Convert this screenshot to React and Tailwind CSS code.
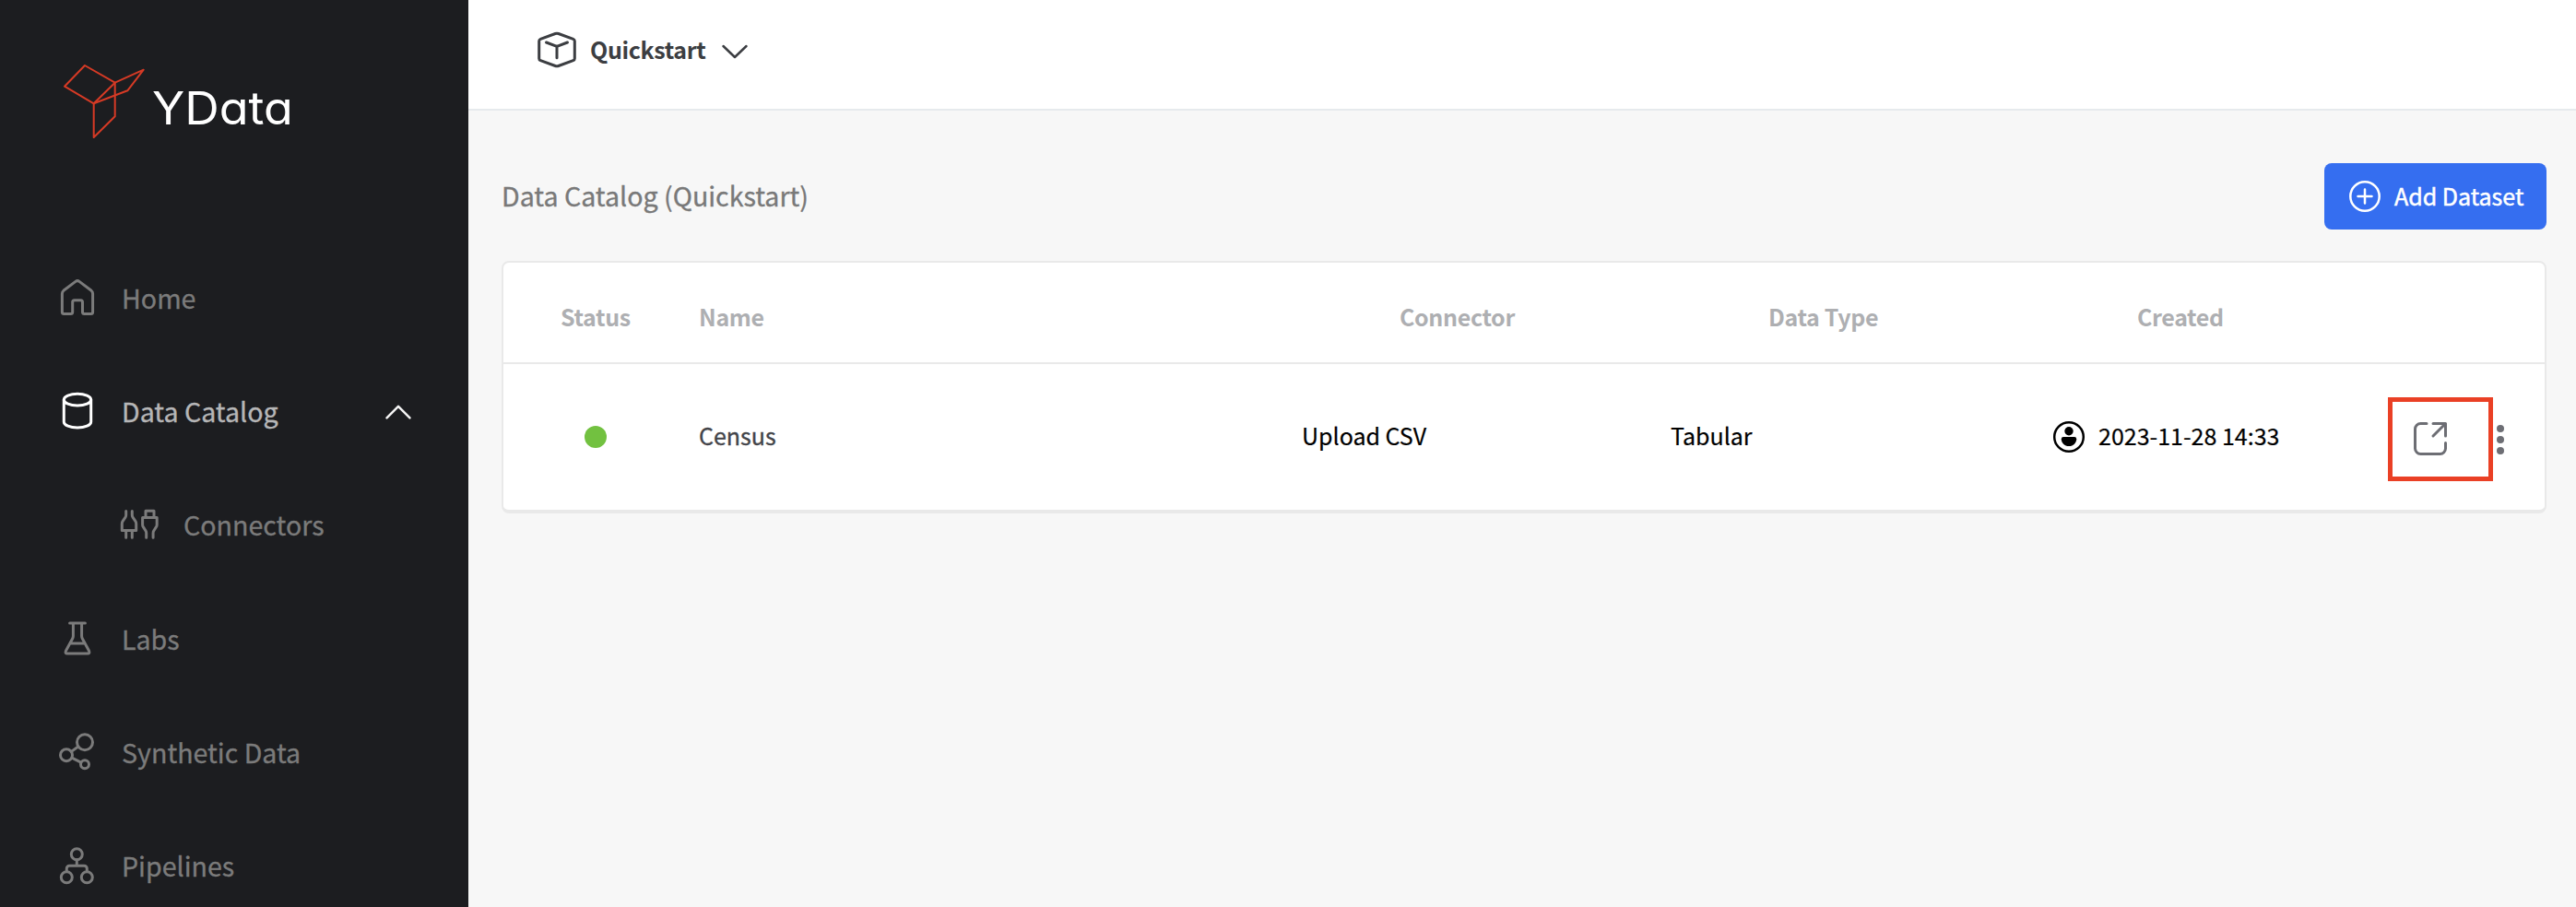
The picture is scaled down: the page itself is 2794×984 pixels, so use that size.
import React from "react";

function Icon({ w = 44, h = 44, sw = 3, className = "", children }) {
  return (
    <svg
      width={w}
      height={h}
      viewBox={`0 0 ${w} ${h}`}
      fill="none"
      stroke="currentColor"
      strokeWidth={sw}
      strokeLinecap="round"
      strokeLinejoin="round"
      className={`shrink-0 ${className}`}
    >
      {children}
    </svg>
  );
}

const HomeIcon = () => (
  <Icon>
    <path d="M5.4 38.5a2 2 0 0 1-2-2V16.5q0-2 1.5-3.2L18 3.4q2-1.5 4 0l13.1 9.9q1.5 1.2 1.5 3.2v20a2 2 0 0 1-2 2H27.5a2 2 0 0 1-2-2V25.7a2 2 0 0 0-2-2h-6.8a2 2 0 0 0-2 2v10.8a2 2 0 0 1-2 2Z" />
  </Icon>
);
const DatabaseIcon = () => (
  <Icon className="text-white">
    <ellipse cx="20" cy="8.7" rx="14.7" ry="6.4" />
    <path d="M5.3 8.7v24c0 3.5 6.6 6.4 14.7 6.4s14.7-2.9 14.7-6.4v-24" />
  </Icon>
);
const PlugsIcon = () => (
  <Icon>
    <path d="M6.7 6.4v4.4q0 1.5-.8 2.6l-2.600 3.800q-1 1.400-1 3v7.200h15.400v-7.200q0-1.600-1-3l-2.600-3.800q-.8-1.100-.8-2.600V6.400M6.700 27.400v7.800M13.300 27.400v7.800" />
    <path d="M28 13.600V6.300h9v7.300M24.600 13.600h15.600v7.600q0 1.500-.9 2.700l-2.300 3.600q-.9 1.200-.9 2.700v5M24.600 13.600v7.600q0 1.500.9 2.700l2.300 3.600q.9 1.200.9 2.700v5" />
  </Icon>
);
const FlaskIcon = () => (
  <Icon>
    <path d="M11.600 5h16.800M15.400 5v14q0 1.500-.7 2.800l-7.200 13.200q-1.300 3 1.500 3h22q2.800 0 1.500-3l-7.200-13.200q-.7-1.300-.7-2.800V5M12.400 27h15.200" />
  </Icon>
);
const MoleculeIcon = () => (
  <Icon>
    <circle cx="28" cy="11.200" r="8.500" />
    <circle cx="8" cy="25.200" r="6.500" />
    <circle cx="28" cy="35.200" r="4.500" />
    <path d="M13.400 21.400l7.400-5.400M13.900 28.200l9.900 5" />
  </Icon>
);
const PipelineIcon = () => (
  <Icon>
    <circle cx="19.300" cy="8.700" r="6" />
    <circle cx="8.300" cy="33.700" r="6" />
    <circle cx="30.300" cy="33.700" r="6" />
    <path d="M19.300 14.700v6.600M8.300 27.500v-3.200a3 3 0 0 1 3-3h16a3 3 0 0 1 3 3v3.200" />
  </Icon>
);

function NavItem({ icon, label, active, nested, trailing }) {
  return (
    <li
      className={`flex h-[123.2px] items-center ${nested ? "pl-[130px]" : "pl-[64px]"} pr-[60px] ${
        active ? "text-[#b6b6b7]" : "text-[#7b7b7b]"
      }`}
    >
      {icon}
      <span
        className={`-mt-px whitespace-nowrap text-[28.6px] leading-[42px] [-webkit-text-stroke:0.35px_currentColor] ${
          nested ? "ml-[25px]" : "ml-[24px]"
        }`}
      >
        {label}
      </span>
      {trailing}
    </li>
  );
}

function Sidebar() {
  return (
    <aside className="flex h-full w-[508px] shrink-0 flex-col overflow-hidden bg-[#1c1d20]">
      <div className="flex h-[262px] shrink-0 items-start pl-[68px] pt-[68px]">
        <svg width="92" height="84" viewBox="0 0 92 84" fill="none" stroke="#d63a25" strokeWidth="2" strokeLinejoin="round">
          <path d="M24 3L2 25.700L33.700 44.300L56.700 21.700Z" />
          <path d="M56.700 21.700L87.700 7.700L70.300 30.300L33.700 44.300" />
          <path d="M56.700 21.700V58.300L33.700 81V44.300" />
        </svg>
        <span className="mt-[19px] ml-[5px] origin-left scale-x-105 font-['Inter',sans-serif] text-[49.500px] leading-[60px] font-normal text-white [font-feature-settings:'cv11']">
          YData
        </span>
      </div>
      <ul className="flex flex-col">
        <NavItem icon={<HomeIcon />} label="Home" />
        <NavItem
          icon={<DatabaseIcon />}
          label="Data Catalog"
          active
          trailing={
            <Icon w={32} h={20} sw={2.5} className="ml-auto text-[#f4f4f4]">
              <path d="M3.500 16.300L16 3.800L28.500 16.300" />
            </Icon>
          }
        />
        <NavItem icon={<PlugsIcon />} label="Connectors" nested />
        <NavItem icon={<FlaskIcon />} label="Labs" />
        <NavItem icon={<MoleculeIcon />} label="Synthetic Data" />
        <NavItem icon={<PipelineIcon />} label="Pipelines" />
      </ul>
    </aside>
  );
}

function TopBar() {
  return (
    <header className="flex h-[120px] shrink-0 items-start border-b-2 border-[#e6eaed] bg-white pt-[32px] pl-[74px] text-[#3c3e42]">
      <Icon>
        <path d="M20.300 4.500q1.700-.6 3.400 0l16 5.800q1.600.6 1.600 2.300v18.800q0 1.700-1.600 2.300l-16 5.800q-1.700.6-3.400 0l-16-5.800q-1.600-.6-1.600-2.300V12.600q0-1.700 1.600-2.300Z" />
        <path d="M10.500 14L22 18.300L33.500 14M22 18.300v12.500" />
      </Icon>
      <span className="ml-[14px] w-[125px] text-[25px] leading-[42px] font-semibold tracking-[-0.35px]">Quickstart</span>
      <Icon w={32} h={20} sw={2.5} className="mt-[14px] ml-[16px]">
        <path d="M3.500 4L16 16L28.500 4" />
      </Icon>
    </header>
  );
}

function DatasetTable() {
  return (
    <section className="mt-[34px] rounded-lg border-2 border-b-4 border-[#e9e9e9] bg-white">
      <div className="grid h-[110px] grid-cols-[212px_760px_400px_400px_1fr] items-center border-b-2 border-[#e9e9e9] pt-[8px] text-[25px] leading-[38px] font-bold tracking-[-0.35px] text-[#aeafb2]">
        <span className="pl-[62px]">Status</span>
        <span>Name</span>
        <span>Connector</span>
        <span>Data Type</span>
        <span>Created</span>
      </div>
      <div className="grid h-[158px] grid-cols-[212px_654px_400px_414px_1fr] items-center text-[25px] leading-[38px] text-black">
        <span className="ml-[88px] size-6 rounded-full bg-[#72c140]" />
        <span className="-mt-1 text-[#434449] [-webkit-text-stroke:0.35px_currentColor]">Census</span>
        <span className="-mt-1 [-webkit-text-stroke:0.2px_currentColor]">Upload CSV</span>
        <span className="-mt-1 [-webkit-text-stroke:0.2px_currentColor]">Tabular</span>
        <div className="flex items-center">
          <svg width="36" height="36" viewBox="0 0 36 36" className="shrink-0">
            <circle cx="18" cy="18" r="15.800" fill="none" stroke="#000" strokeWidth="2.500" />
            <circle cx="18" cy="11.700" r="4.700" fill="#000" />
            <path d="M12 18h12q2.200 0 2.200 2.200c0 4.200-3.400 7.800-8.200 7.800s-8.200-3.600-8.200-7.800q0-2.200 2.200-2.200Z" fill="#000" />
          </svg>
          <span className="-mt-1 ml-[14px] whitespace-nowrap [-webkit-text-stroke:0.2px_currentColor]">2023-11-28 14:33</span>
          <div className="mt-[5px] ml-auto flex h-[91px] w-[114px] items-center border-[5px] border-[#ea4025] pl-[21px] text-[#6d6e74]">
            <Icon w={40} h={40} className="-mt-px">
              <path d="M16 3.500H9.500a6 6 0 0 0-6 6v21a6 6 0 0 0 6 6h21a6 6 0 0 0 6-6V24.500" />
              <path d="M23 3.500h13.500V17M36.500 3.500L23 17" />
            </Icon>
          </div>
          <div className="mt-[6px] mr-[44px] ml-[4px] flex flex-col gap-1">
            <i className="size-2 rounded-full bg-[#6d6e74]" />
            <i className="size-2 rounded-full bg-[#6d6e74]" />
            <i className="size-2 rounded-full bg-[#6d6e74]" />
          </div>
        </div>
      </div>
    </section>
  );
}

export default function App() {
  return (
    <div className="flex h-[984px] w-[2794px] overflow-hidden bg-[#f7f7f7] font-['Noto_Sans_CJK_SC','Noto_Sans',sans-serif]">
      <Sidebar />
      <div className="flex min-w-0 flex-1 flex-col">
        <TopBar />
        <main className="pt-[57px] pr-[32px] pl-[36px]">
          <div className="flex h-[72px] items-center justify-between">
            <h1 className="-mt-[2px] text-[28.600px] leading-[42px] text-[#797979] [-webkit-text-stroke:0.35px_currentColor]">
              Data Catalog (Quickstart)
            </h1>
            <button className="flex h-[72px] w-[241px] items-center rounded-lg bg-[#356ef0] pl-[26px] text-white">
              <Icon w={36} h={36} sw={2.5}>
                <circle cx="18" cy="18" r="15.700" />
                <path d="M10.500 18h15M18 10.500v15" />
              </Icon>
              <span className="-mt-[2px] ml-[14px] text-[25px] leading-[38px] font-normal whitespace-nowrap [-webkit-text-stroke:0.5px_currentColor]">
                Add Dataset
              </span>
            </button>
          </div>
          <DatasetTable />
        </main>
      </div>
    </div>
  );
}
